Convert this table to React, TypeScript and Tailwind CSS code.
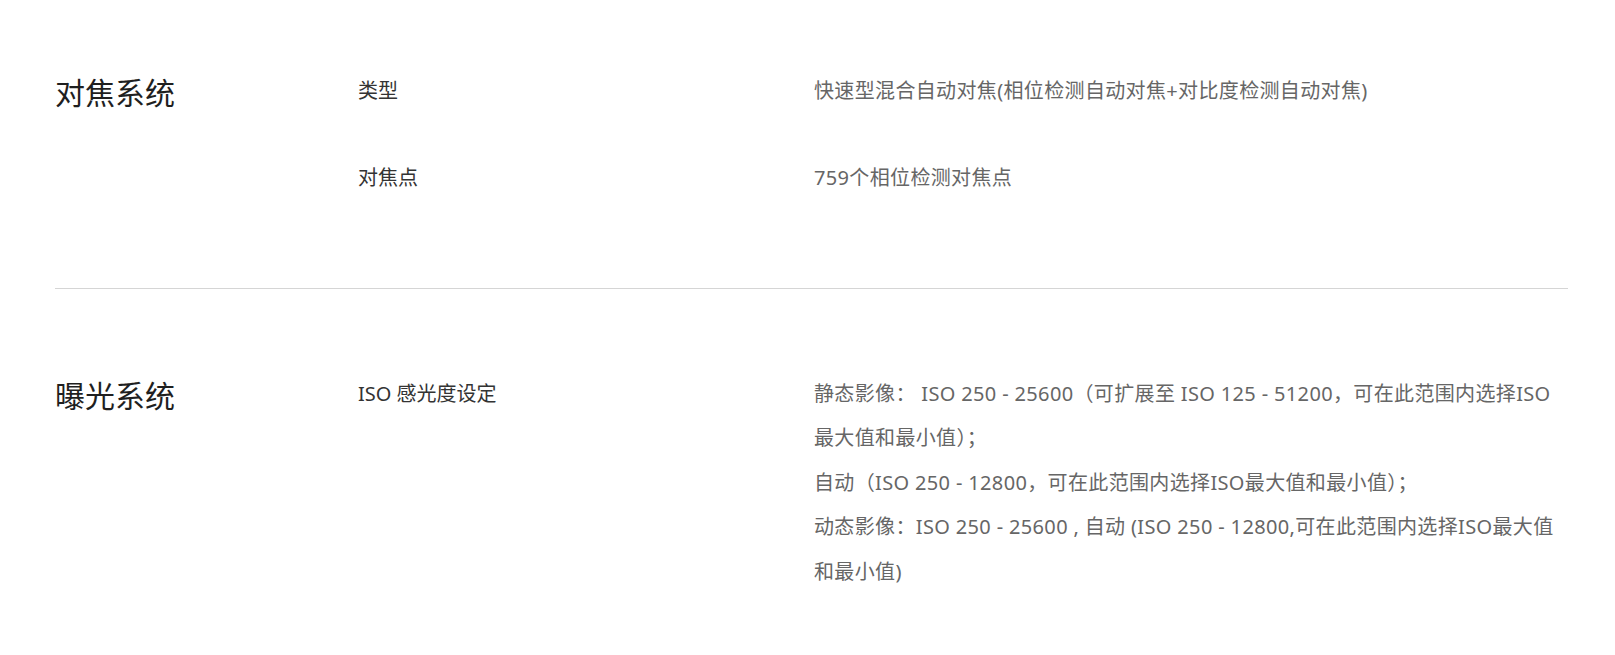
const SECTIONS = [
  {
    title: '对焦系统',
    rows: [
      { label: '类型', value: ['快速型混合自动对焦(相位检测自动对焦+对比度检测自动对焦)'] },
      { label: '对焦点', value: ['759个相位检测对焦点'] },
    ],
  },
  {
    title: '曝光系统',
    rows: [
      {
        label: 'ISO 感光度设定',
        value: [
          '静态影像： ISO 250 - 25600（可扩展至 ISO 125 - 51200，可在此范围内选择ISO最大值和最小值）；',
          '自动（ISO 250 - 12800，可在此范围内选择ISO最大值和最小值）；',
          '动态影像：ISO 250 - 25600 , 自动 (ISO 250 - 12800,可在此范围内选择ISO最大值和最小值)',
        ],
      },
    ],
  },
];

export default function App() {
  return (
    <div
      className="min-h-screen bg-white pl-[55px] pr-[47px]"
      style={{ fontFamily: '"Noto Sans", "Noto Sans CJK SC", sans-serif' }}
    >
      {SECTIONS.map((section, i) => (
        <section
          key={section.title}
          className={
            i === 0
              ? 'grid grid-cols-[303px_1fr] border-b border-[#d5d5d5] pt-[47px] pb-[66px]'
              : 'grid grid-cols-[303px_1fr] pt-[61px] pb-[40px]'
          }
        >
          <h2 className="pt-[21px] text-[30px] leading-[50px] font-normal text-[#1f1f1f]">
            {section.title}
          </h2>
          <div>
            {section.rows.map((row) => (
              <div key={row.label} className="grid grid-cols-[456px_1fr] py-[21.5px] text-[20px] leading-[44.5px]">
                <div className="text-[#333333]">{row.label}</div>
                <div className="tracking-[0.35px] text-[#666666]">
                  {row.value.map((line) => (
                    <p key={line}>{line}</p>
                  ))}
                </div>
              </div>
            ))}
          </div>
        </section>
      ))}
    </div>
  );
}
